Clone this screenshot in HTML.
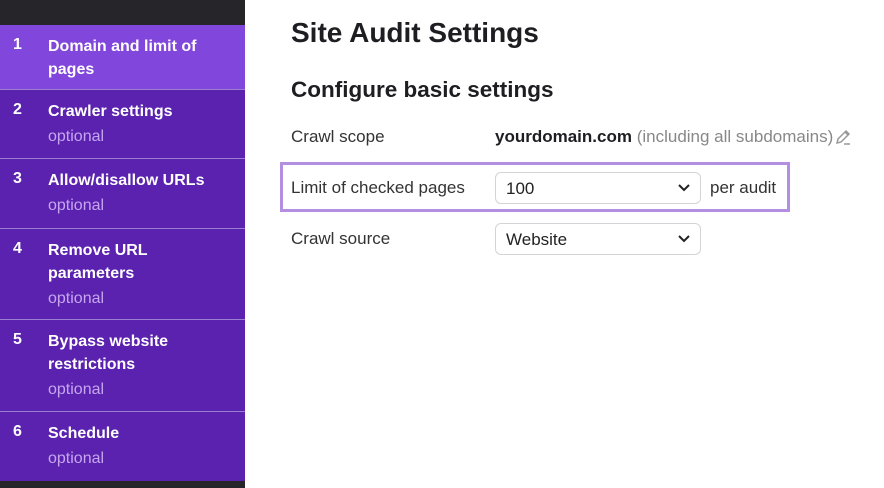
<!DOCTYPE html><html><head><style>
body{margin:0;width:884px;height:488px;overflow:hidden;background:#fff;font-family:"Liberation Sans",sans-serif;position:relative}
.sb{position:absolute;left:0;top:0;width:245px;height:488px;background:#25252a}
.it{position:absolute;left:0;width:245px;background:#5a22ae;border-top:1px solid #9a7fd0;color:#fff}
.it .n{position:absolute;left:13px;top:11px;font-weight:bold;font-size:16px}
.it .t{position:absolute;left:48px;top:10px;font-weight:bold;font-size:16px;line-height:23px;width:160px}
.it .o{color:#c6a6f0;font-weight:normal;line-height:28px}
.h1{position:absolute;left:291px;top:17px;font-size:28px;font-weight:bold;color:#1d1d22}
.h2{position:absolute;left:291px;top:77px;font-size:22.5px;font-weight:bold;color:#1d1d22}
.l{position:absolute;left:291px;font-size:17px;color:#333}
.sel{position:absolute;left:495px;width:206px;height:32px;border:1px solid #d4d4d8;border-radius:6px;font-size:17px;color:#222;box-sizing:border-box;padding:6px 0 0 10px}
.sel svg{position:absolute;right:10px;top:11px}
</style></head><body>
<div class="sb">
<div class="it" style="top:25px;height:64px;background:#8146dc;border-top:none"><span class="n">1</span><div class="t" style="width:190px">Domain and limit of pages</div></div>
<div class="it" style="top:89px;height:69px"><span class="n">2</span><div class="t">Crawler settings<br><span class="o">optional</span></div></div>
<div class="it" style="top:158px;height:70px"><span class="n">3</span><div class="t" style="width:190px">Allow/disallow URLs<br><span class="o">optional</span></div></div>
<div class="it" style="top:228px;height:91px"><span class="n">4</span><div class="t">Remove URL parameters<br><span class="o">optional</span></div></div>
<div class="it" style="top:319px;height:92px"><span class="n">5</span><div class="t">Bypass website restrictions<br><span class="o">optional</span></div></div>
<div class="it" style="top:411px;height:69px"><span class="n">6</span><div class="t">Schedule<br><span class="o">optional</span></div></div>
</div>
<div class="h1">Site Audit Settings</div>
<div class="h2">Configure basic settings</div>
<div class="l" style="top:127px">Crawl scope</div>
<div style="position:absolute;left:495px;top:127px;font-size:17px;color:#888;white-space:nowrap"><b style="color:#1d1d22">yourdomain.com</b> (including all subdomains)</div>
<svg style="position:absolute;left:834px;top:128px" width="18" height="18" viewBox="0 0 18 18" fill="none" stroke="#999" stroke-width="1.5"><path d="M3 15l1-4 8-8 3 3-8 8z M11 4l3 3 M10 16h6"/></svg>
<div style="position:absolute;left:280px;top:162px;width:504px;height:44px;border:3px solid #b48ee0"></div>
<div class="l" style="top:178px">Limit of checked pages</div>
<div class="sel" style="top:172px">100<svg width="12" height="8" viewBox="0 0 12 8"><path d="M1 1l5 5 5-5" stroke="#222" stroke-width="2" fill="none"/></svg></div>
<div class="l" style="top:178px;left:710px">per audit</div>
<div class="l" style="top:229px">Crawl source</div>
<div class="sel" style="top:223px">Website<svg width="12" height="8" viewBox="0 0 12 8"><path d="M1 1l5 5 5-5" stroke="#222" stroke-width="2" fill="none"/></svg></div>
</body></html>
